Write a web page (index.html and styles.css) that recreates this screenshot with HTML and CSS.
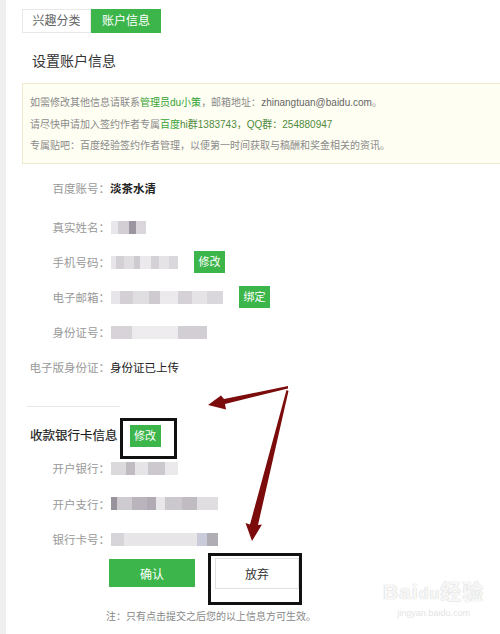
FILE: index.html
```html
<!DOCTYPE html>
<html>
<head>
  <meta charset="UTF-8">
  <title>账户信息</title>
  <link rel="stylesheet" href="styles.css">
</head>
<body>
  <div class="page">
    <div class="tabs">
      <span class="tab">兴趣分类</span>
      <span class="tab active">账户信息</span>
    </div>

    <h2 class="title">设置账户信息</h2>

    <div class="notice">
      <p>如需修改其他信息请联系<span class="hl">管理员du小策</span>，邮箱地址：<span class="mail">zhinangtuan@baidu.com</span>。</p>
      <p>请尽快申请加入签约作者专属<span class="hl">百度</span><span class="hl-dark">hi群1383743，QQ群：254880947</span></p>
      <p>专属贴吧：百度经验签约作者管理，以便第一时间获取与稿酬和奖金相关的资讯。</p>
    </div>

    <div class="fields">
      <div class="row first">
        <span class="label">百度账号：</span>
        <span class="value strong">淡茶水清</span>
      </div>
      <div class="row">
        <span class="label">真实姓名：</span>
        <span class="blur b-name"></span>
      </div>
      <div class="row">
        <span class="label">手机号码：</span>
        <span class="blur b-phone"></span>
        <a class="btn-sm phone-edit">修改</a>
      </div>
      <div class="row">
        <span class="label">电子邮箱：</span>
        <span class="blur b-mail"></span>
        <a class="btn-sm mail-bind">绑定</a>
      </div>
      <div class="row">
        <span class="label">身份证号：</span>
        <span class="blur b-id"></span>
      </div>
      <div class="row">
        <span class="label">电子版身份证：</span>
        <span class="value">身份证已上传</span>
      </div>
    </div>

    <hr class="divider">

    <div class="bank-head">
      <h3>收款银行卡信息</h3>
      <span class="mark edit-mark"><a class="btn-sm">修改</a></span>
    </div>

    <div class="fields bank">
      <div class="row">
        <span class="label">开户银行：</span>
        <span class="blur b-bank"></span>
      </div>
      <div class="row">
        <span class="label">开户支行：</span>
        <span class="blur b-branch"></span>
      </div>
      <div class="row">
        <span class="label">银行卡号：</span>
        <span class="blur b-card"></span>
      </div>
    </div>

    <div class="actions">
      <button class="btn-ok">确认</button>
      <span class="mark cancel-mark"><button class="btn-cancel">放弃</button></span>
    </div>

    <p class="note">注：只有点击提交之后您的以上信息方可生效。</p>

    <!-- red pointer arrows drawn over the form -->
    <svg class="arrows" width="500" height="634" viewBox="0 0 500 634">
      <polygon points="288,386 224,399 221,395.5 208,405 226,409.5 225,404 288,388.5" fill="#7c0c0c"/>
      <polygon points="286.5,390 288.5,391 258,525 262,524.5 252,541 245.5,523 250,524.5" fill="#7c0c0c"/>
    </svg>

    <div class="watermark">
      <span class="wm-logo">Bai<span class="wm-du">du</span>经验</span>
      <span class="wm-url">jingyan.baidu.com</span>
    </div>
  </div>
</body>
</html>
```

FILE: styles.css
```css
body {
  margin: 0;
  font-family: "Liberation Sans", "Noto Sans CJK SC", sans-serif;
  color: #333;
  background: #fff;
}

.page {
  position: relative;
  box-sizing: border-box;
  min-height: 634px;
  overflow: hidden;
  border-left: 6px solid #efefef;
  padding: 9px 0 0 16px;
}

/* tabs */
.tabs {
  display: flex;
}

.tab {
  box-sizing: border-box;
  width: 69px;
  height: 24px;
  line-height: 22px;
  text-align: center;
  font-size: 12px;
  color: #666;
  border: 1px solid #e8e8e8;
}

.tab.active {
  width: 70px;
  background: #3cb54a;
  border-color: #3cb54a;
  color: #fff;
}

.title {
  margin: 18px 0 0 10px;
  font-size: 14px;
  line-height: 20px;
  font-weight: normal;
  color: #333;
}

/* notice box */
.notice {
  margin: 12px -10px 0 0;
  padding: 8px 0 6px 7px;
  background: #fffef2;
  border: 1px solid #f0eacc;
  font-size: 10px;
  color: #8a8a8a;
}

.notice p {
  margin: 0;
  line-height: 21.5px;
}

.notice .hl {
  color: #35a335;
}

.notice .hl-dark {
  color: #4f8a3c;
}

.notice .mail {
  color: #666;
}

/* form rows */
.fields {
  margin-top: 7px;
}

.row {
  display: flex;
  align-items: center;
  height: 35px;
  font-size: 11.5px;
}

.row.first {
  margin-bottom: 4px;
}

.label {
  width: 88px;
  text-align: right;
  color: #999;
  white-space: nowrap;
}

.value {
  color: #222;
}

.value.strong {
  font-weight: bold;
}

/* masked values */
.blur {
  display: block;
  height: 13px;
  margin-left: 1px;
  background: linear-gradient(90deg, #e4e2e6 0 8%, #cfcbd0 8% 20%, #dcdadd 20% 34%, #c9c5cb 34% 44%, #e9e7ea 44% 60%, #d0ccd2 60% 72%, #e2e0e3 72% 86%, #d6d3d8 86% 100%);
  opacity: 0.9;
}

.b-name {
  width: 35px;
  background: linear-gradient(90deg, #e6e4e8 0 20%, #cdc8ce 20% 50%, #8f8a96 50% 70%, #d5d1d7 70% 100%);
}

.b-phone {
  width: 67px;
}

.b-mail {
  width: 112px;
}

.b-id {
  width: 96px;
  background: linear-gradient(90deg, #d2ced3 0 22%, #ebe9ec 22% 70%, #cdc9cf 70% 100%);
}

.b-bank {
  width: 67px;
  background: linear-gradient(90deg, #d8d5d9 0 22%, #b9b4bb 22% 36%, #e3e1e4 36% 55%, #c6c2c8 55% 80%, #e8e6e9 80% 100%);
}

.b-branch {
  width: 107px;
  background: linear-gradient(90deg, #8c8690 0 6%, #c9c5cb 6% 20%, #b2acb5 20% 34%, #a9a1ad 34% 42%, #e6e4e7 42% 50%, #c6c2c8 50% 66%, #b9b4bb 66% 80%, #dcdadd 80% 100%);
}

.b-card {
  width: 107px;
  background: linear-gradient(90deg, #d3d0d5 0 12%, #e5e3e6 12% 80%, #c4c6d6 80% 90%, #a8a4ac 90% 100%);
}

.btn-sm {
  display: inline-block;
  width: 31px;
  height: 22px;
  line-height: 22px;
  text-align: center;
  font-size: 11px;
  color: #fff;
  background: #3cb54a;
}

.phone-edit {
  margin-left: 16px;
}

.mail-bind {
  margin-left: 16px;
}

.divider {
  width: 93px;
  margin: 21px 0 0 5px;
  border: 0;
  border-top: 1px solid #e8e8e8;
}

/* bank section */
.bank-head {
  display: flex;
  align-items: flex-start;
  margin-top: 11px;
}

.bank-head h3 {
  margin: 8px 0 0 8px;
  font-size: 12.5px;
  line-height: 20px;
  font-weight: normal;
  color: #1e1e1e;
  -webkit-text-stroke: 0.2px #1e1e1e;
}

/* black outline boxes */
.mark {
  display: block;
  border: 3px solid #111;
}

.edit-mark {
  margin-left: 2px;
  padding: 4px 13px 9px 7px;
}

.fields.bank {
  margin-top: -8px;
}

.fields.bank .row {
  height: 35.5px;
}

.actions {
  display: flex;
  align-items: flex-start;
  margin: -4px 0 0 87px;
}

.btn-ok {
  width: 86px;
  height: 28px;
  margin-top: 6px;
  border: none;
  background: #3cb54a;
  color: #fff;
  font-family: inherit;
  font-size: 12px;
}

.cancel-mark {
  margin-left: 13px;
  padding: 2px 0 13px 4px;
}

.btn-cancel {
  width: 84px;
  height: 31px;
  border: 1px solid #e0e0e0;
  background: #fff;
  color: #333;
  font-family: inherit;
  font-size: 12px;
}

.note {
  margin: 5px 0 0 84px;
  font-size: 10px;
  line-height: 14px;
  color: #888;
}

.arrows {
  position: absolute;
  left: -6px;
  top: 0;
}

/* faint site watermark in the corner */
.watermark {
  position: absolute;
  left: 377px;
  top: 579px;
  display: flex;
  flex-direction: column;
  align-items: center;
  color: #f7f7f7;
}

.wm-logo {
  font-size: 21px;
  line-height: 26px;
  font-weight: bold;
  letter-spacing: 1px;
  text-shadow: 0 0 1px #d4d4d4, 0 0 1px #d4d4d4;
}

.wm-du {
  font-size: 16px;
}

.wm-url {
  font-size: 9px;
  line-height: 12px;
  color: #e4e4e4;
}
```
